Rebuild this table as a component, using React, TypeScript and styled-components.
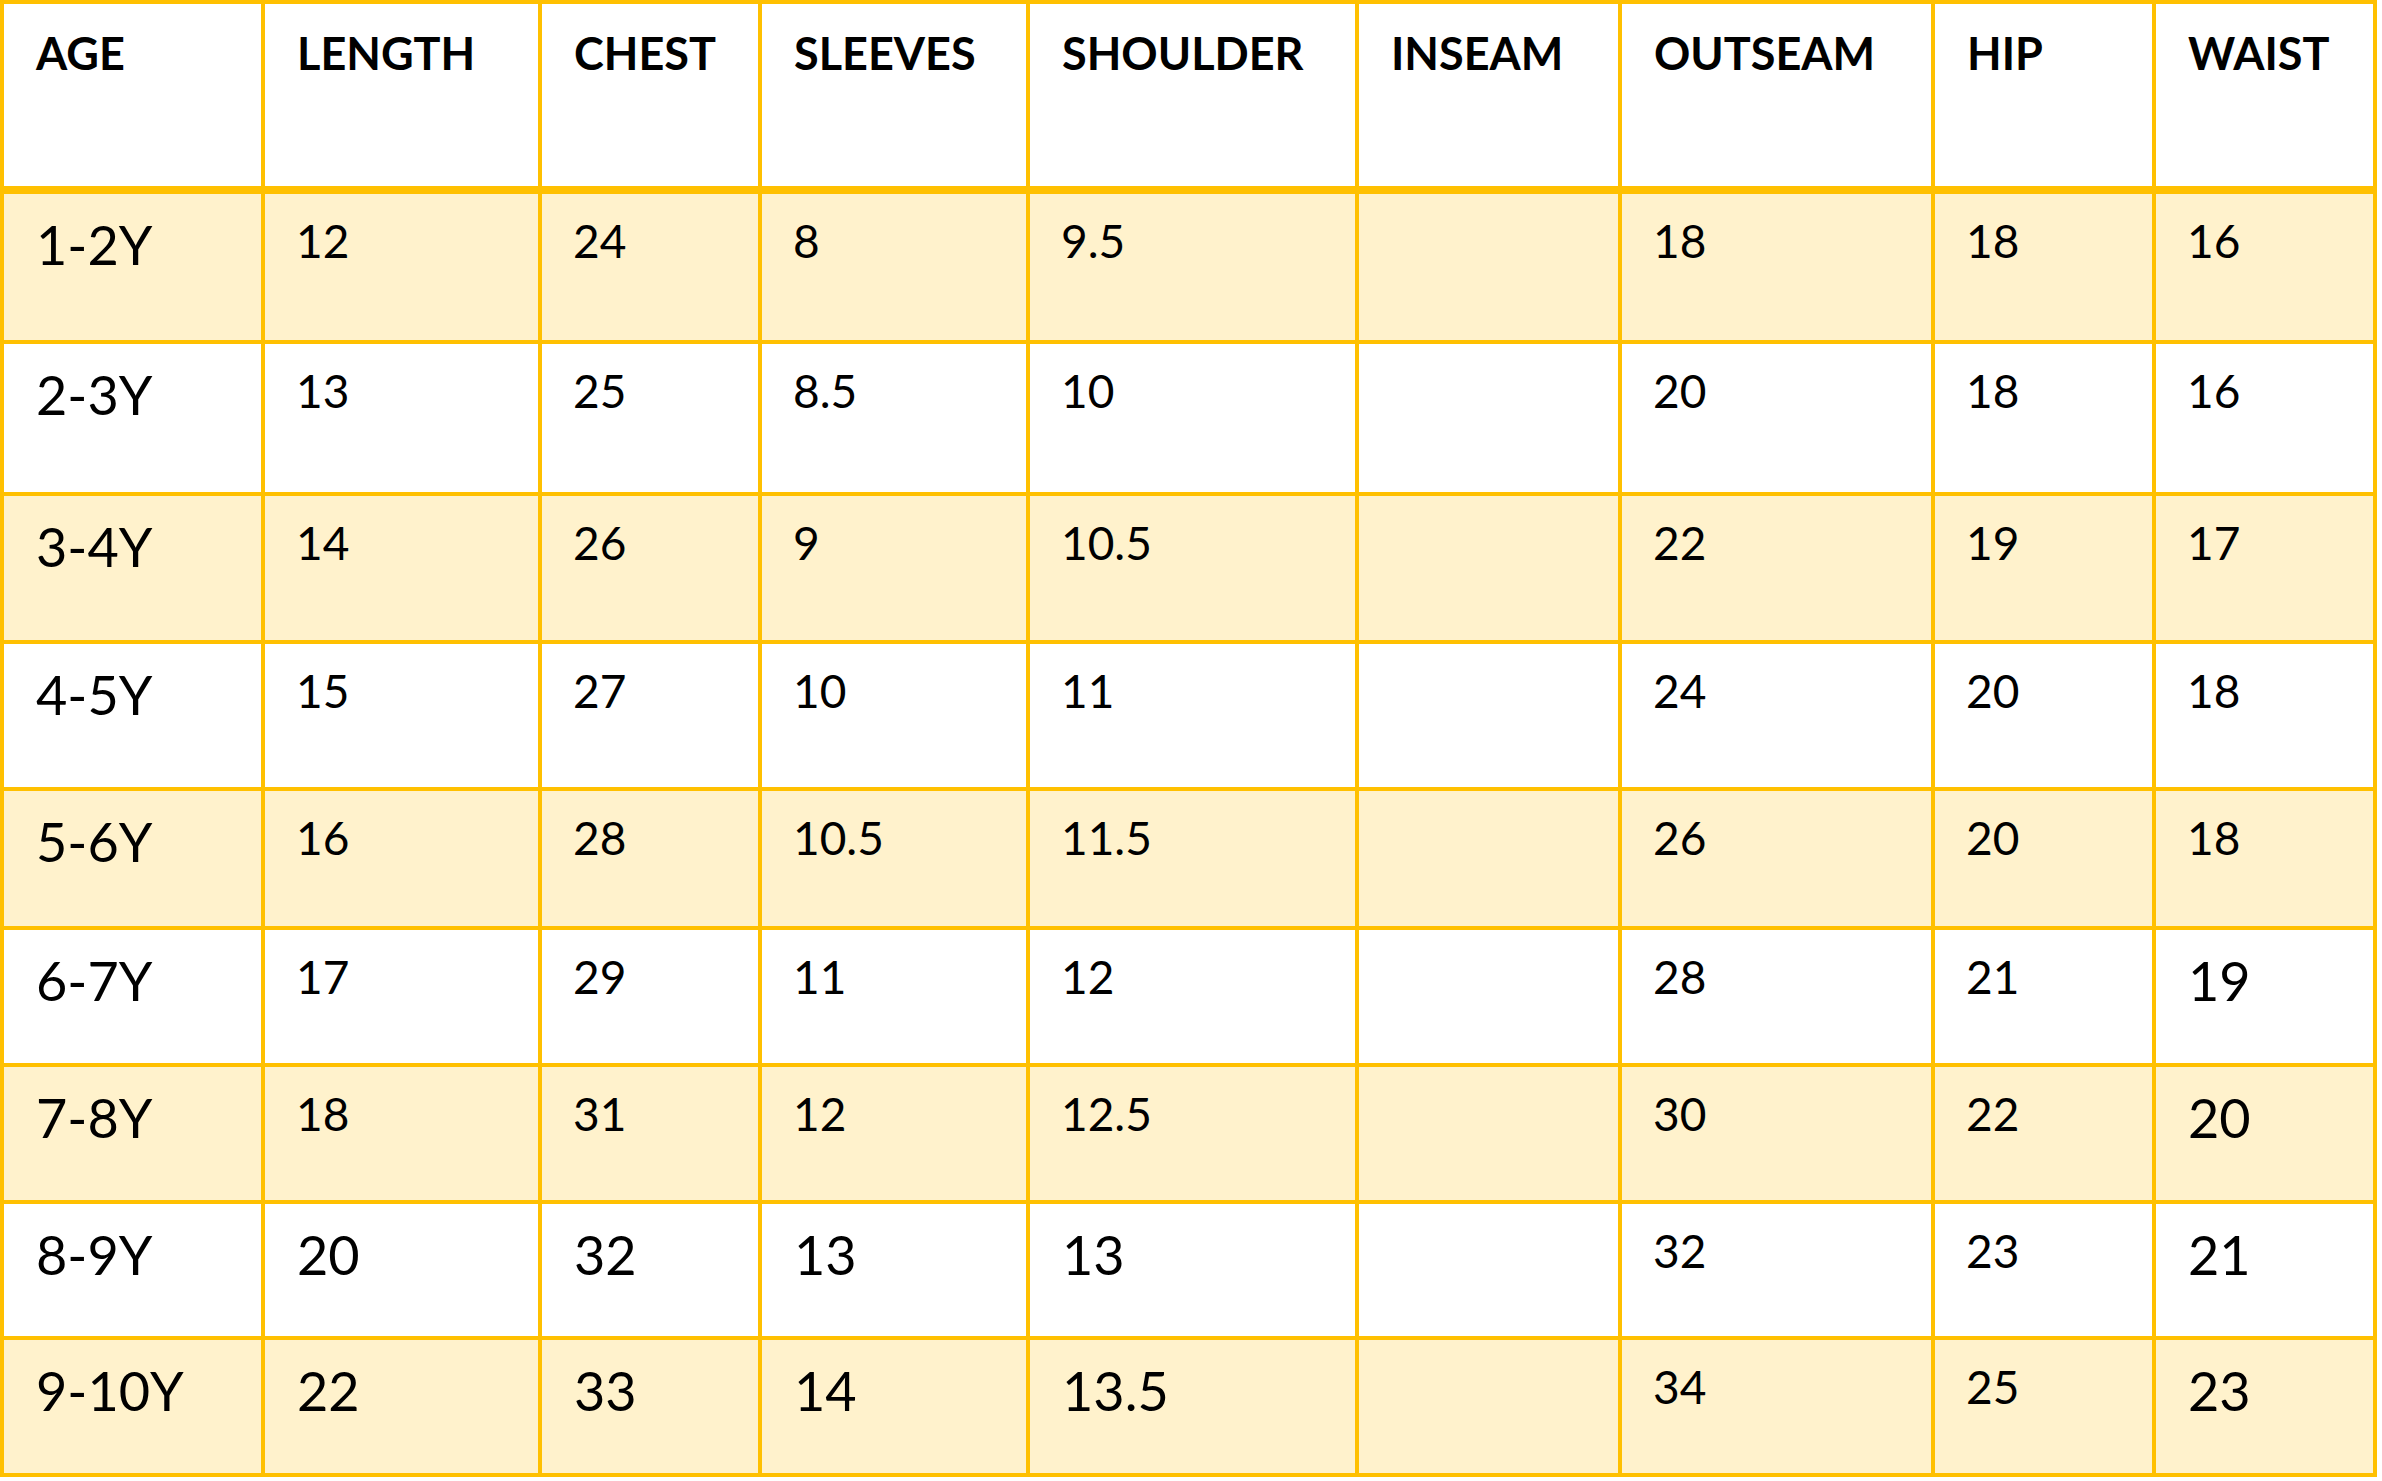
import styled, { createGlobalStyle } from "styled-components";

const GOLD = "#FFC000";
const CREAM = "#FFF2CC";

const GlobalStyle = createGlobalStyle`
  html, body {
    margin: 0;
    padding: 0;
    background: #ffffff;
  }
  body {
    font-family: Lato, "Open Sans", "Liberation Sans", sans-serif;
    color: #000000;
  }
`;

const COLUMNS = [257, 273, 216, 264, 325, 259, 309, 217, 217];
const ROWS = [186, 146, 148, 144, 143, 135, 133, 133, 132, 133];

const HEADERS = [
  "AGE",
  "LENGTH",
  "CHEST",
  "SLEEVES",
  "SHOULDER",
  "INSEAM",
  "OUTSEAM",
  "HIP",
  "WAIST",
];

// "L" marks a value printed in the larger size
type Value = string | [string, "L"];

const DATA: Value[][] = [
  [["1-2Y", "L"], "12", "24", "8", "9.5", "", "18", "18", "16"],
  [["2-3Y", "L"], "13", "25", "8.5", "10", "", "20", "18", "16"],
  [["3-4Y", "L"], "14", "26", "9", "10.5", "", "22", "19", "17"],
  [["4-5Y", "L"], "15", "27", "10", "11", "", "24", "20", "18"],
  [["5-6Y", "L"], "16", "28", "10.5", "11.5", "", "26", "20", "18"],
  [["6-7Y", "L"], "17", "29", "11", "12", "", "28", "21", ["19", "L"]],
  [["7-8Y", "L"], "18", "31", "12", "12.5", "", "30", "22", ["20", "L"]],
  [
    ["8-9Y", "L"],
    ["20", "L"],
    ["32", "L"],
    ["13", "L"],
    ["13", "L"],
    "",
    "32",
    "23",
    ["21", "L"],
  ],
  [
    ["9-10Y", "L"],
    ["22", "L"],
    ["33", "L"],
    ["14", "L"],
    ["13.5", "L"],
    "",
    "34",
    "25",
    ["23", "L"],
  ],
];

const Grid = styled.div`
  display: grid;
  grid-template-columns: ${COLUMNS.map((w) => `${w}px`).join(" ")};
  grid-template-rows: ${ROWS.map((h) => `${h}px`).join(" ")};
  gap: 4px;
  padding: 4px;
  width: max-content;
  background: ${GOLD};
`;

const HeaderCell = styled.div`
  box-sizing: border-box;
  background: #ffffff;
  border-bottom: 4px solid ${GOLD};
  padding: 22px 0 0 32px;
  font-size: 45px;
  font-weight: 700;
  line-height: 1.2;
  white-space: nowrap;
`;

const Cell = styled.div<{ $shaded: boolean; $large: boolean }>`
  box-sizing: border-box;
  background: ${(p) => (p.$shaded ? CREAM : "#ffffff")};
  padding: ${(p) => (p.$large ? "19px 0 0 32px" : "19px 0 0 31px")};
  font-size: ${(p) => (p.$large ? "54px" : "46px")};
  font-weight: 400;
  line-height: 1.2;
  white-space: nowrap;
`;

export default function App() {
  return (
    <>
      <GlobalStyle />
      <Grid>
        {HEADERS.map((label) => (
          <HeaderCell key={label}>{label}</HeaderCell>
        ))}
        {DATA.map((row, r) =>
          row.map((value, c) => {
            const large = Array.isArray(value);
            const text = large ? value[0] : value;
            return (
              <Cell key={`${r}-${c}`} $shaded={r % 2 === 0} $large={large}>
                {text}
              </Cell>
            );
          })
        )}
      </Grid>
    </>
  );
}
